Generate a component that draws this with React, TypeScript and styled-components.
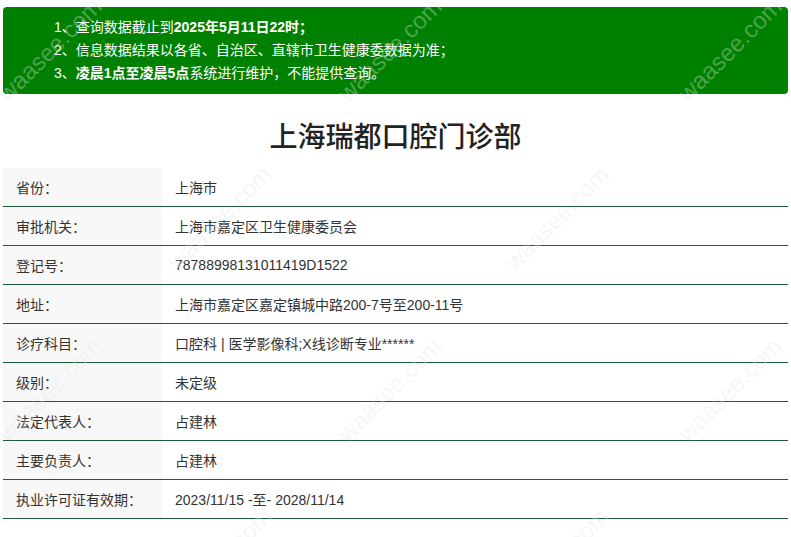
import React from "react";
import styled, { createGlobalStyle } from "styled-components";

const GlobalStyle = createGlobalStyle`
  html, body { margin: 0; padding: 0; background: #ffffff; }
  body {
    font-family: "Liberation Sans", "Noto Sans CJK SC", sans-serif;
    color: #333333;
  }
`;

const Page = styled.div`
  position: relative;
  width: 791px;
  height: 537px;
  overflow: hidden;
  padding: 7px 3px 0;
  box-sizing: border-box;
`;

const Notice = styled.div`
  background: #008000;
  border-radius: 4px;
  padding: 9px 0 9px 51px;
  color: #ffffff;
  font-size: 14px;
  line-height: 23px;
`;

const NoticeLine = styled.div`
  white-space: nowrap;
`;

const Strong = styled.b`
  font-weight: bold;
`;

const Title = styled.h1`
  margin: 24px 0 10px;
  text-align: center;
  font-size: 28px;
  line-height: 40px;
  font-weight: 500;
  color: #222222;
`;

const Table = styled.div`
  display: flex;
  flex-direction: column;
`;

const Row = styled.div`
  display: grid;
  grid-template-columns: 159px 1fr;
  height: 39px;
  border-bottom: 1px solid #1f5a3c;
  box-sizing: border-box;
  font-size: 14px;
`;

const Label = styled.div`
  background: #f8f8f8;
  padding-left: 13px;
  display: flex;
  align-items: center;
  color: #333333;
`;

const Value = styled.div`
  padding-left: 13px;
  display: flex;
  align-items: center;
  color: #333333;
  white-space: nowrap;
`;

const MarkLayer = styled.div`
  position: absolute;
  inset: 0;
  pointer-events: none;
`;

const Mark = styled.span`
  position: absolute;
  font-family: "Liberation Sans", sans-serif;
  font-size: 24px;
  color: rgba(225, 232, 225, 0.34);
  white-space: nowrap;
  transform: translate(-50%, -50%) rotate(-45deg);
`;

const rows: [string, string][] = [
  ["省份：", "上海市"],
  ["审批机关：", "上海市嘉定区卫生健康委员会"],
  ["登记号：", "78788998131011419D1522"],
  ["地址：", "上海市嘉定区嘉定镇城中路200-7号至200-11号"],
  ["诊疗科目：", "口腔科 | 医学影像科;X线诊断专业******"],
  ["级别：", "未定级"],
  ["法定代表人：", "占建林"],
  ["主要负责人：", "占建林"],
  ["执业许可证有效期：", "2023/11/15 -至- 2028/11/14"],
];

const marks: [number, number][] = [
  [50, 50], [390, 50], [730, 50],
  [220, 218], [557, 218],
  [50, 390], [390, 390], [730, 390],
  [220, 560], [557, 560],
];

export default function App() {
  return (
    <>
      <GlobalStyle />
      <Page>
        <Notice>
          <NoticeLine>
            1、查询数据截止到<Strong>2025年5月11日22时；</Strong>
          </NoticeLine>
          <NoticeLine>2、信息数据结果以各省、自治区、直辖市卫生健康委数据为准；</NoticeLine>
          <NoticeLine>
            3、<Strong>凌晨1点至凌晨5点</Strong>系统进行维护，不能提供查询。
          </NoticeLine>
        </Notice>
        <Title>上海瑞都口腔门诊部</Title>
        <Table>
          {rows.map(([k, v]) => (
            <Row key={k}>
              <Label>{k}</Label>
              <Value>{v}</Value>
            </Row>
          ))}
        </Table>
        <MarkLayer>
          {marks.map(([x, y]) => (
            <Mark key={`${x}-${y}`} style={{ left: x, top: y }}>
              waasee.com
            </Mark>
          ))}
        </MarkLayer>
      </Page>
    </>
  );
}
